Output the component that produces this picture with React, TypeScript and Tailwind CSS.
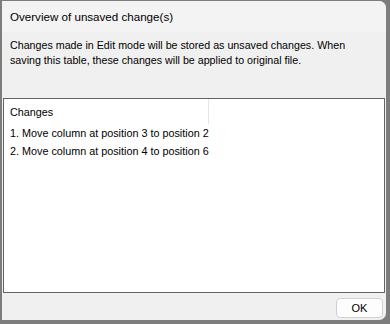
export default function App() {
  const font = { fontFamily: '"Segoe UI", "Liberation Sans", Arial, sans-serif' };
  return (
    <div className="w-[390px] h-[324px] bg-[#7d7d7d] pt-[1px] pl-[2px] pr-[4px] pb-[4px] overflow-hidden" style={font}>
      <div className="w-[384px] h-[319px] bg-[#f0f0f0] rounded-r-[7px] flex flex-col overflow-hidden text-[11px] text-black">
        <div className="h-[31px] bg-[#f3f3f3] flex items-center pl-[8px] text-[11.6px] leading-none">
          Overview of unsaved change(s)
        </div>
        <div className="h-[66px] pl-[8px] pt-[6px] leading-[15px] text-[10.7px]">
          <div>Changes made in Edit mode will be stored as unsaved changes. When</div>
          <div>saving this table, these changes will be applied to original file.</div>
        </div>
        <div className="mx-[1px] h-[195px] bg-white border border-[#646464] flex flex-col">
          <div className="h-[25px] flex">
            <div className="w-[205px] border-r border-[#e5e5e5] pl-[6px] pt-[2px] flex items-center text-[10.8px]">Changes</div>
          </div>
          <div className="pl-[6px] text-[10.8px]">
            <div className="h-[18px] flex items-center">1. Move column at position 3 to position 2</div>
            <div className="h-[18px] flex items-center">2. Move column at position 4 to position 6</div>
          </div>
        </div>
        <div className="flex-1 flex justify-end items-start pt-[5px] pr-[3px]">
          <button className="w-[47px] h-[20px] rounded-[4px] border border-[#d0d0d0] bg-[#fdfdfd] text-[11px] flex items-center justify-center">
            OK
          </button>
        </div>
      </div>
    </div>
  );
}
